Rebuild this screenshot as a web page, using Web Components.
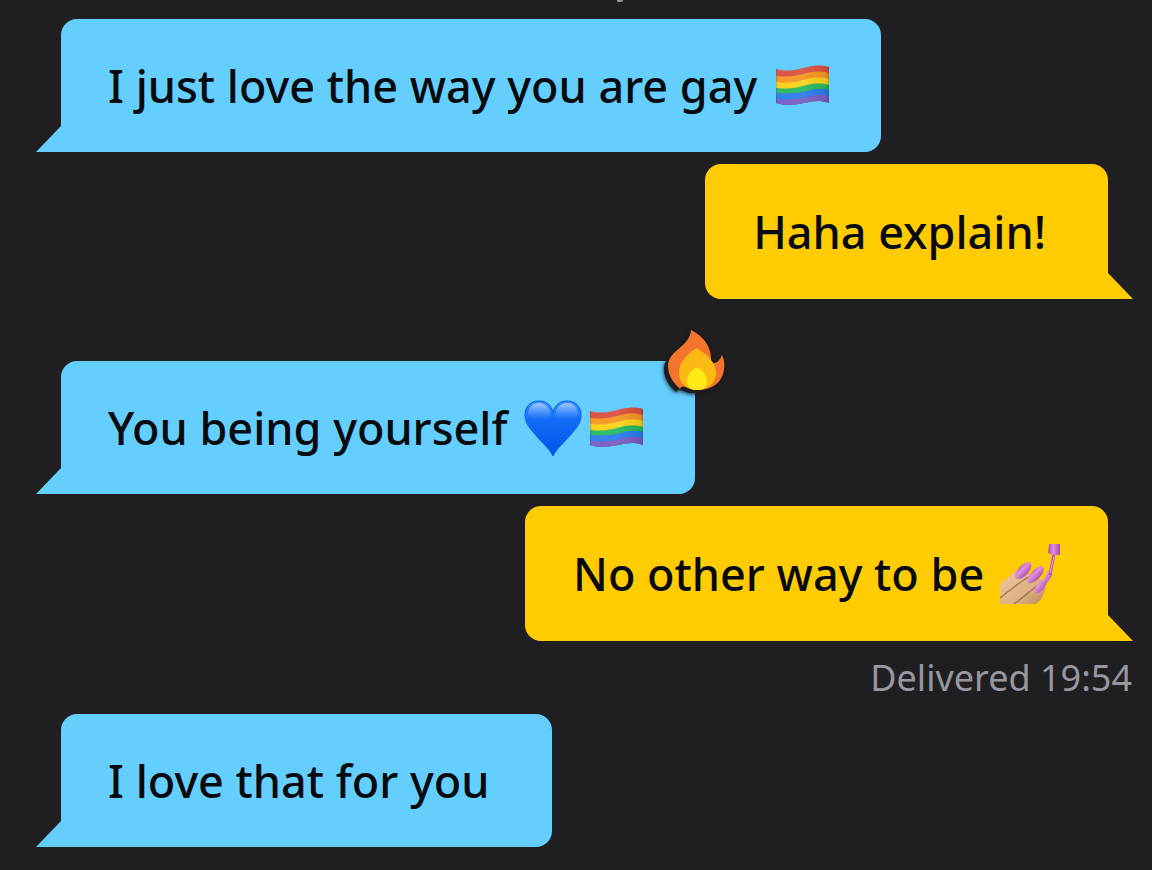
<!DOCTYPE html>
<html lang="en">
<head>
<meta charset="utf-8">
<meta name="viewport" content="width=device-width, initial-scale=1">
<title>Chat</title>
<style>
  body {
    margin: 0;
    background: #1f1f21;
    font-family: "Noto Sans", "Open Sans", sans-serif;
  }
</style>
</head>
<body>
<chat-thread>
  <chat-bubble side="in">I just love the way you are gay <chat-emoji name="flag"></chat-emoji></chat-bubble>
  <chat-bubble side="out" plain>Haha explain!</chat-bubble>
  <chat-bubble side="in" reacted>You being yourself <chat-emoji name="heart"></chat-emoji><chat-emoji name="flag"></chat-emoji><chat-emoji slot="reaction" name="fire"></chat-emoji></chat-bubble>
  <chat-bubble side="out">No other way to be <chat-emoji name="nails"></chat-emoji></chat-bubble>
  <chat-status>Delivered 19:54</chat-status>
  <chat-bubble side="in" plain>I love that for you</chat-bubble>
</chat-thread>

<script>
const EMOJI = {
  flag: {
    label: "Rainbow flag",
    svg: `
      <defs>
        <clipPath id="cloth"><path d="M3 13C14 16 24 14 34 11C43 9 50 9 56 11V47C47 44 40 45 31 47C21 49 12 50 3 47Z"/></clipPath>
        <linearGradient id="fold">
          <stop offset="0" stop-color="#333" stop-opacity=".25"/>
          <stop offset=".06" stop-color="#fff" stop-opacity=".05"/>
          <stop offset=".5" stop-color="#fff" stop-opacity=".08"/>
          <stop offset=".95" stop-color="#222" stop-opacity=".08"/>
          <stop offset="1" stop-color="#222" stop-opacity=".3"/>
        </linearGradient>
      </defs>
      <g clip-path="url(#cloth)">
        <path fill="#d94d3c" d="M0 8H60V60H0Z"/>
        <path fill="#f7941d" d="M0 19C12 22 24 20 34 17C43 15 50 15 60 18V60H0Z"/>
        <path fill="#fbd116" d="M0 25C12 28 24 26 34 23C43 21 50 21 60 24V60H0Z"/>
        <path fill="#23b75b" d="M0 31C12 34 24 32 34 29C43 27 50 27 60 30V60H0Z"/>
        <path fill="#2879ec" d="M0 36C12 39 24 37 34 35C43 32 50 32 60 35V60H0Z"/>
        <path fill="#765ac4" d="M0 42C12 45 24 43 34 41C43 38 50 38 60 41V60H0Z"/>
        <path fill="url(#fold)" d="M3 8H56V54H3Z"/>
      </g>`
  },
  heart: {
    label: "Blue heart",
    svg: `
      <defs>
        <linearGradient id="blue" x2="0" y2="1">
          <stop offset="0" stop-color="#3d91ff"/>
          <stop offset=".35" stop-color="#126cf8"/>
          <stop offset="1" stop-color="#0053e5"/>
        </linearGradient>
        <linearGradient id="shine" x2="0" y2="1">
          <stop offset="0" stop-color="#b9dcff" stop-opacity=".8"/>
          <stop offset="1" stop-color="#5ca3ff" stop-opacity="0"/>
        </linearGradient>
      </defs>
      <path fill="url(#blue)" stroke="#075cf0" d="M30 58C27 51 19 45 11 35C5 28 2 24 2 17C2 8 8 3 16 3C23 3 28 7 30 14C32 7 37 3 44 3C52 3 58 8 58 17C58 24 55 28 49 35C41 45 33 51 30 58Z"/>
      <path fill="url(#shine)" d="M5 17C5 9 10 5 16 5C23 5 27 10 28 17C22 23 11 24 5 17ZM55 17C55 9 50 5 44 5C37 5 33 10 32 17C38 23 49 24 55 17Z"/>`
  },
  fire: {
    label: "Fire",
    svg: `
      <path fill="#f2752d" d="M25 0C42 9 46 21 45 33C51 34 54 30 56 25C59 31 59 38 57 44C54 54 45 60 31 60C22 60 17 53 14 59C9 54 2 47 2 36C2 20 24 17 25 0Z"/>
      <path fill="#fdb913" d="M31 18C41 25 50 32 50 43C50 53 42 60 31 60C20 60 13 53 13 43C13 32 21 24 31 18Z"/>
      <path fill="#ffea16" d="M31 37C37 41 41 45 41 51C41 57 37 60 31 60C25 60 21 57 21 51C21 45 25 41 31 37Z"/>`
  },
  nails: {
    label: "Nail polish",
    svg: `
      <defs>
        <linearGradient id="skin" x2="1" y2="1">
          <stop offset="0" stop-color="#edc99b"/>
          <stop offset=".6" stop-color="#dfb283"/>
          <stop offset="1" stop-color="#bd8960"/>
        </linearGradient>
        <linearGradient id="polish" x2="1" y2="1">
          <stop offset=".1" stop-color="#8c3d92"/>
          <stop offset=".45" stop-color="#e391db"/>
          <stop offset=".8" stop-color="#953d9c"/>
        </linearGradient>
        <linearGradient id="cap">
          <stop offset="0" stop-color="#b44db5"/>
          <stop offset=".45" stop-color="#e18cdc"/>
          <stop offset="1" stop-color="#a847a9"/>
        </linearGradient>
      </defs>
      <path fill="url(#skin)" d="M0 40C6 35 12 29 18 25L29 30L42 35C46 38 47 44 44 48C43 54 40 57 36 60H0Z"/>
      <path fill="none" stroke="#a77855" stroke-width="1.5" d="M0 54C10 46 18 40 28 33M14 60C24 53 30 47 37 42"/>
      <path fill="url(#polish)" d="M15 33C15 27 22 19 28 18C33 18 32 24 28 29C23 35 17 37 15 33Z"/>
      <path fill="url(#polish)" d="M27 37C28 31 35 23 41 22C46 23 44 29 39 34C34 39 28 41 27 37Z"/>
      <path fill="url(#polish)" d="M34 48C34 43 39 38 43 36C45 34 46 29 49 26C53 26 53 31 50 35C47 38 46 41 44 44C41 49 35 51 34 48Z"/>
      <path fill="none" stroke="#b455b4" stroke-width="3" d="M50 31L54 10"/>
      <path fill="none" stroke="#eba0e6" d="M50 29L54 12"/>
      <path fill="url(#cap)" d="M49 0H60V11H54L48 9Z"/>`
  }
};

class ChatThread extends HTMLElement {
  connectedCallback() {
    const shadowRoot = this.attachShadow({ mode: "open" });

    shadowRoot.innerHTML = `
    <style>
      :host {
        display: block;
      }
      .earlier {
        width: 6px;
        height: 2px;
        margin: 0 auto;
        border-radius: 0 0 4px 2px;
        background: #98979d;
        transform: translateX(44px);
      }
      .messages {
        display: flex;
        flex-direction: column;
        gap: 12px;
        padding: 17px 44px 22px 61px;
      }
    </style>
    <div class="earlier"></div>
    <div class="messages"><slot></slot></div>
    `;
  }
}

class ChatBubble extends HTMLElement {
  connectedCallback() {
    const shadowRoot = this.attachShadow({ mode: "open" });

    shadowRoot.innerHTML = `
    <style>
      :host {
        display: block;
        position: relative;
        align-self: flex-start;
        box-sizing: border-box;
        padding: 36px 48px 36px 47px;
        border-radius: 16px 16px 16px 0;
        background: #64ceff;
        color: #080b0e;
        font-size: 45px;
        font-weight: 500;
        line-height: 61px;
      }
      :host([side="out"]) {
        align-self: flex-end;
        padding: 37px 48px;
        border-radius: 16px 16px 0 16px;
        background: #ffcc02;
      }
      :host([plain]) {
        padding-right: 62px;
      }
      :host([reacted]) {
        margin-top: 50px;
      }
      .tail {
        position: absolute;
        right: 100%;
        bottom: 0;
        width: 25px;
        height: 26px;
        background: inherit;
        clip-path: polygon(100% 0, 100% 100%, 0 100%);
      }
      :host([side="out"]) .tail {
        right: auto;
        left: 100%;
        clip-path: polygon(0 0, 100% 100%, 0 100%);
      }
      .reaction {
        position: absolute;
        top: -32px;
        right: -31px;
        line-height: 0;
        filter: drop-shadow(-4px 3px 0 #1c1d20) drop-shadow(0 1px 2px #141517);
      }
    </style>
    <slot></slot>
    <div class="reaction"><slot name="reaction"></slot></div>
    <div class="tail"></div>
    `;
  }
}

class ChatEmoji extends HTMLElement {
  connectedCallback() {
    const { label, svg } = EMOJI[this.getAttribute("name")];
    const shadowRoot = this.attachShadow({ mode: "open" });

    shadowRoot.innerHTML = `
    <style>
      :host {
        display: inline-block;
        width: 60px;
        height: 60px;
        margin: 1px 0 0 4px;
        vertical-align: top;
      }
      svg {
        display: block;
        width: 100%;
        height: 100%;
      }
    </style>
    <svg viewBox="0 0 60 60" role="img" aria-label="${label}">${svg}</svg>
    `;
  }
}

class ChatStatus extends HTMLElement {
  connectedCallback() {
    const shadowRoot = this.attachShadow({ mode: "open" });

    shadowRoot.innerHTML = `
    <style>
      :host {
        display: block;
        align-self: flex-end;
        margin-right: -24px;
        color: #98979f;
        font-size: 36px;
        line-height: 49px;
      }
    </style>
    <slot></slot>
    `;
  }
}

customElements.define("chat-thread", ChatThread);
customElements.define("chat-bubble", ChatBubble);
customElements.define("chat-emoji", ChatEmoji);
customElements.define("chat-status", ChatStatus);
</script>
</body>
</html>
